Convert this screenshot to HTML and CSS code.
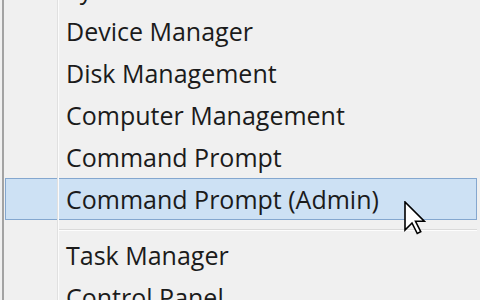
FILE: index.html
```html
<!DOCTYPE html>
<html>
<head>
<meta charset="utf-8">
<link rel="stylesheet" href="styles.css">
</head>
<body>
<div class="menu">
  <div class="gutter"></div>
  <div class="item">System</div>
  <div class="item">Device Manager</div>
  <div class="item">Disk Management</div>
  <div class="item">Computer Management</div>
  <div class="item">Command Prompt</div>
  <div class="item hover">Command Prompt (Admin)</div>
  <div class="sep"></div>
  <div class="item">Task Manager</div>
  <div class="item">Control Panel</div>
  <svg class="cursor" width="22" height="36" viewBox="0 0 22 36">
    <polygon points="1,1 1,29 8,22 13.25,32.5 16.75,30.75 11.5,20.25 20.25,20.25" fill="#ffffff" stroke="#000000" stroke-width="1.6" stroke-linejoin="miter"/>
  </svg>
</div>
</body>
</html>
```
FILE: styles.css
```css
html, body {
  margin: 0;
  padding: 0;
  width: 480px;
  height: 300px;
  overflow: hidden;
  background: #f0f0f0;
}
.menu {
  position: relative;
  margin-left: 2px;
  margin-top: -32px;
  border-left: 2px solid #a3a3a3;
  padding-left: 1px;
  padding-right: 3px;
  display: flex;
  flex-direction: column;
  font-family: "Open Sans", "Noto Sans", sans-serif;
  font-size: 25px;
  color: #1b1b1b;
}
.gutter {
  position: absolute;
  left: 53px;
  top: 0;
  bottom: 0;
  width: 1px;
  background: #e0e0e0;
  border-right: 1px solid #fbfbfb;
}
.item {
  flex: none;
  height: 42px;
  box-sizing: border-box;
  border: 1px solid transparent;
  padding-left: 60px;
  display: flex;
  align-items: center;
  white-space: nowrap;
}
.item.hover {
  border-color: #84a7cf;
  background: rgba(190, 218, 245, 0.7);
}
.sep {
  flex: none;
  height: 14px;
  box-sizing: border-box;
  margin-left: 53px;
  padding-top: 9px;
}
.sep::before {
  content: "";
  display: block;
  height: 1px;
  background: #dadada;
  border-bottom: 1px solid #fdfdfd;
}
.cursor {
  position: absolute;
  left: 400px;
  top: 233px;
}
```
